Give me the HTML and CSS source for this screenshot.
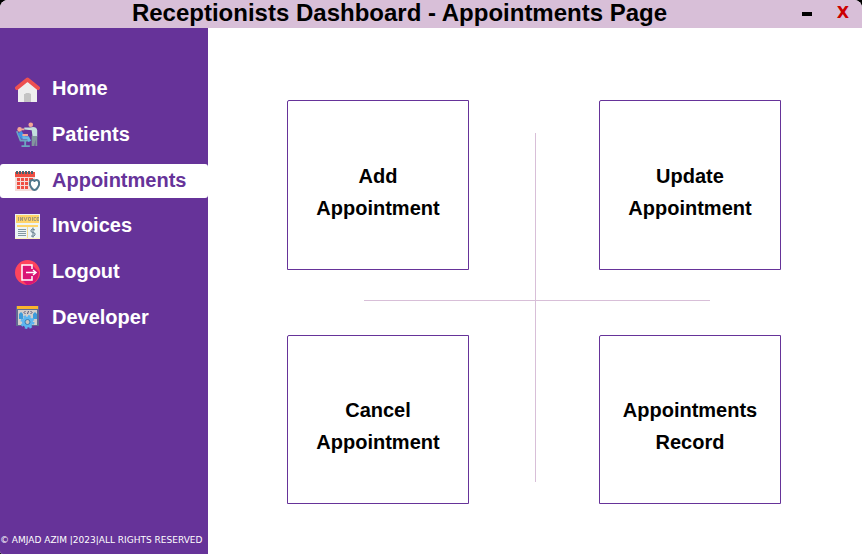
FILE: index.html
```html
<!DOCTYPE html>
<html lang="en">
<head>
<meta charset="utf-8">
<title>Receptionists Dashboard - Appointments Page</title>
<link rel="stylesheet" href="styles.css">
</head>
<body>
<div class="window">
  <header class="titlebar">
    <h1>Receptionists Dashboard - Appointments Page</h1>
    <button class="minimize" type="button" aria-label="Minimize"><span class="dash"></span></button>
    <button class="close" type="button" aria-label="Close">X</button>
  </header>
  <div class="body">
    <aside class="sidebar">
      <nav>
        <a href="#">
          <svg viewBox="0 0 25 25" aria-hidden="true"><path fill="#eee" d="M3 11 12.500 3 22 11V25H3z"/><path fill="#c4c4c4" d="M9 25v-8h1l1-1h3l2 1v8z"/><path fill="none" stroke="#ed5050" stroke-width="4" stroke-linecap="round" stroke-linejoin="round" d="M2 11 12.500 2.500 23 11"/></svg>
          Home</a>
        <a href="#">
          <svg viewBox="0 0 25 27" aria-hidden="true"><path fill="#c3dfdd" d="M15 6q7-2 8 3v7h-5l-1-7-8-1V6z"/><path fill="#82969e" d="M17 15h6v11h-2v-7l-1 7h-3z"/><circle cx="16" cy="3" r="2.500" fill="#f4a796"/><circle cx="4" cy="8" r="2.500" fill="#f4a796"/><path fill="none" stroke="#6ca7bf" stroke-width="2" d="M1 10 5 20h9M10 20v5M6 26h9"/><path fill="none" stroke="#3f93e7" stroke-width="5" d="M4 11 8 17"/><path fill="none" stroke="#6cb9e6" stroke-width="3" d="M7 17h6l2 4"/><path fill="none" stroke="#f4a796" stroke-width="2" d="M7 14h6M6 8h3"/></svg>
          Patients</a>
        <a href="#" class="active" aria-current="page">
          <svg viewBox="0 0 25 25" aria-hidden="true"><path fill="#f04f43" d="M0 4h20v5H0z"/><path fill="#f4ddda" d="M0 9h20v14H0z"/><path fill="#f04f43" d="M2 10h3v3H2zM6 10h3v3H6zM10 10h3v3h-3zM14 10h4v3h-4zM2 14h3v3H2zM6 14h3v3H6zM10 14h3v3h-3zM14 14h4v3h-4zM2 18h3v3H2zM6 18h3v3H6zM10 18h3v3h-3z"/><path stroke="#49636f" stroke-width="2" d="M2 3v3M5 3v3M8 3v3M11 3v3M14 3v3M17 3v3"/><path fill="#fff" stroke="#51788c" stroke-width="2" stroke-linejoin="round" d="M15.500 13q2-2 4 0 2-2 4 0 1.500 3-.5 6-1.500 3-3.500 3t-3.500-3q-2-3-.5-6z"/></svg>
          Appointments</a>
        <a href="#">
          <svg viewBox="0 0 25 25" aria-hidden="true"><path fill="#edf4f6" d="M0 0h25v25H0z"/><path fill="#ffd469" d="M1 1h23v8H1zM2 11h21v2H2z"/><path fill="none" stroke="#a69b79" d="M3.500 3v4M5.500 7V3l2 4V3M9 3l1.500 4L12 3M13.500 3.500h2v3h-2zM17.500 3v4M21 3.500h-2v3h2M24 3.500h-2v3h2M22 5h2"/><path stroke="#8397a2" d="M3 15.500h8M3 17.500h8M3 19.500h8M3 21.500h8"/><path stroke="#f7dc91" d="M12.500 13v11"/><path fill="none" stroke="#657f8d" d="M20 16q-3-2-4 0t2 2.500 2 2.500-4 1M18 13.500v10"/><path fill="#fff2bd" d="M0 24h25v1H0z"/></svg>
          Invoices</a>
        <a href="#">
          <svg viewBox="0 0 25 25" aria-hidden="true"><circle cx="12.500" cy="12.500" r="12.500" fill="#ff445d"/><path fill="#d91574" d="M7 20V5h10l7 7q-1 12-12 13z"/><path fill="none" stroke="#fff" stroke-width="1.500" d="M17 9V5H7v15h10v-4M11 12.500h9M18 10l3 2.500-3 2.500"/></svg>
          Logout</a>
        <a href="#">
          <svg viewBox="0 0 25 25" aria-hidden="true"><path fill="#606a91" d="M1 1h23v20H1z"/><path fill="#fbb42d" d="M2 1h21v3H2z"/><path fill="#d3cecb" d="M3 5h19v15H3z"/><path fill="#3d9bdb" d="M4 9l2-2 2 2v5H4zM18 9l2-2 2 2v5h-4z"/><path fill="none" stroke="#50547b" d="M10.500 6 9 7.500l1.500 1.500M15.500 6 17 7.500 15.500 9M13.500 6l-1 3"/><circle cx="12.500" cy="17" r="5.500" fill="#5db6f0" stroke="#5db6f0" stroke-width="3" stroke-dasharray="2.300 2"/><circle cx="12.500" cy="17" r="2.500" fill="#c7c3c1" stroke="#357eb6"/></svg>
          Developer</a>
      </nav>
      <footer>© AMJAD AZIM |2023|ALL RIGHTS RESERVED</footer>
    </aside>
    <main>
      <button class="card add" type="button">Add<br>Appointment</button>
      <button class="card update" type="button">Update<br>Appointment</button>
      <button class="card cancel" type="button">Cancel<br>Appointment</button>
      <button class="card record" type="button">Appointments<br>Record</button>
      <span class="rule vertical"></span>
      <span class="rule horizontal"></span>
    </main>
  </div>
</div>
</body>
</html>
```
FILE: styles.css
```css
* { box-sizing: border-box; }
body {
  margin: 0;
  background: #000;
  font-family: "Liberation Sans", Arial, sans-serif;
}
button { font: inherit; font-weight: bold; cursor: pointer; }
.window {
  display: flex;
  flex-direction: column;
  min-height: 100vh;
  overflow: hidden;
  border-radius: 8px 8px 0 3px;
  background: #fff;
}
.titlebar {
  display: flex;
  align-items: flex-start;
  height: 28px;
  padding-right: 7px;
  background: #d8bfd8;
}
h1 {
  flex: 1;
  margin: 0;
  padding-left: 16px;
  font-size: 24px;
  line-height: 26px;
  text-align: center;
  white-space: nowrap;
}
.titlebar button {
  display: flex;
  align-items: center;
  justify-content: center;
  height: 28px;
  padding: 0;
  border: 0;
  background: none;
}
.titlebar .minimize { width: 48px; }
.dash { width: 10px; height: 4px; background: #000; }
.titlebar .close {
  width: 24px;
  padding-bottom: 4px;
  color: #c00;
  font-family: "DejaVu Sans", sans-serif;
  font-size: 16px;
}
.body { display: flex; flex: 1; }
.sidebar {
  display: flex;
  flex-direction: column;
  justify-content: space-between;
  width: 208px;
  padding: 44px 0 8px;
  background: #639;
}
nav {
  display: flex;
  flex-direction: column;
  justify-content: space-between;
  height: 263px;
}
nav a {
  display: flex;
  align-items: center;
  gap: 12px;
  height: 34px;
  padding: 0 0 2px 15px;
  border-radius: 3px;
  color: #fff;
  font-size: 20px;
  font-weight: bold;
  line-height: 32px;
  text-decoration: none;
}
nav a.active { background: #fff; color: #639; }
nav svg { flex: none; width: 25px; height: 25px; margin-top: 2px; }
footer {
  color: #fff;
  font-family: "DejaVu Sans", sans-serif;
  font-size: 9px;
  line-height: 12px;
  white-space: nowrap;
}
main {
  display: grid;
  flex: 1;
  grid-template-columns: 1fr 1fr;
  grid-template-rows: 1fr 1fr;
  gap: 65px 130px;
  padding: 72px 81px 50px 79px;
}
.card {
  padding: 14px 0 0;
  border: 1px solid #639;
  border-top-left-radius: 2px;
  background: #fff;
  color: #000;
  font-size: 20px;
  line-height: 32px;
}
.add { grid-area: 1 / 1; }
.update { grid-area: 1 / 2; }
.cancel { grid-area: 2 / 1; }
.record { grid-area: 2 / 2; }
.rule { grid-area: 1 / 1 / 3 / 3; background: #d8bfd8; }
.vertical { justify-self: center; width: 1px; margin: 33px 0 22px 2px; }
.horizontal { align-self: center; height: 1px; margin: 0 71px 4px 77px; }
```
